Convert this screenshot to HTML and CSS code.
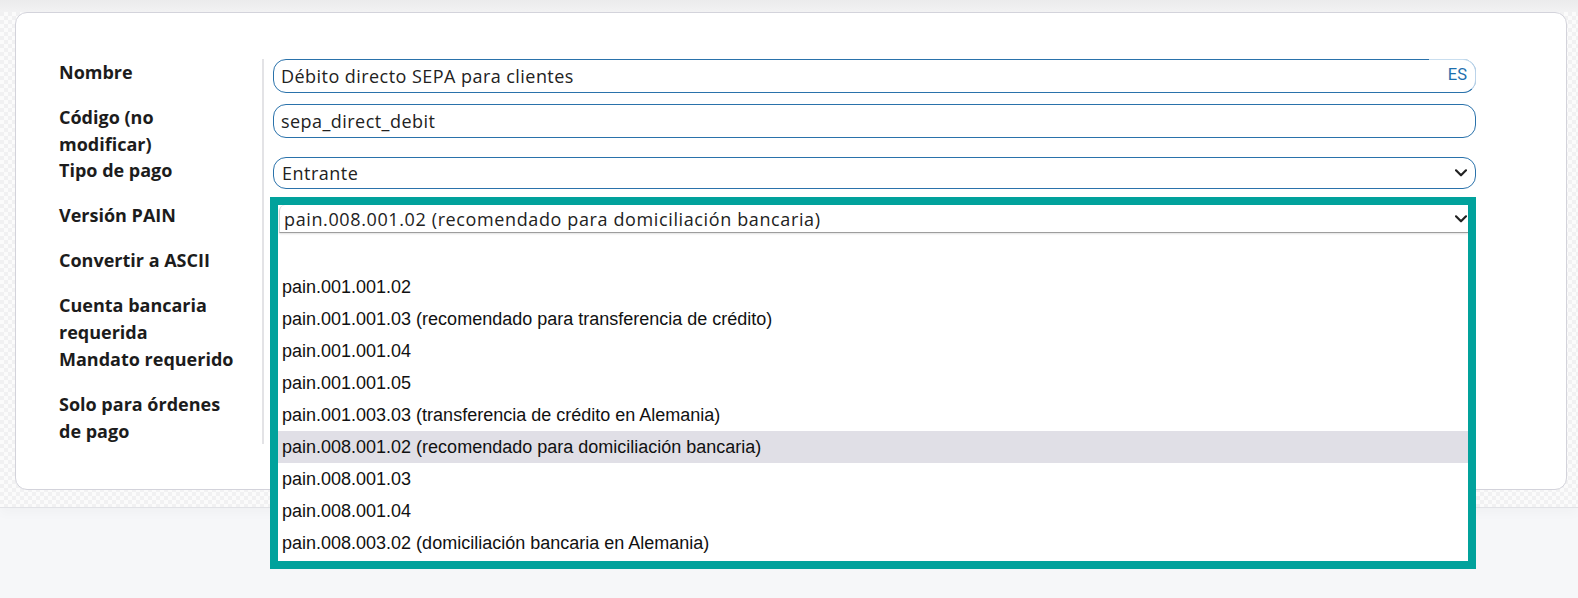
FILE: index.html
```html
<!DOCTYPE html>
<html lang="es">
<head>
<meta charset="utf-8">
<title>Método de pago</title>
<link rel="stylesheet" href="styles.css">
</head>
<body>
<div class="frame">
  <div class="card">
    <div class="form">
      <div class="row">
        <div class="label">Nombre</div>
        <div class="field">
          <div class="input-wrap">
            <div class="input">Débito directo SEPA para clientes</div>
            <span class="lang">ES</span>
          </div>
        </div>
      </div>
      <div class="row">
        <div class="label">Código (no modificar)</div>
        <div class="field"><div class="input">sepa_direct_debit</div></div>
      </div>
      <div class="row">
        <div class="label">Tipo de pago</div>
        <div class="field">
          <div class="select">
            <span>Entrante</span>
            <svg class="chev" width="12" height="8" viewBox="0 0 12 8"><path d="M1 1.3 L6 6.3 L11 1.3"/></svg>
          </div>
        </div>
      </div>
      <div class="row">
        <div class="label">Versión PAIN</div>
        <div class="field field-pain">
          <div class="popup">
            <div class="popup-head">
              <span>pain.008.001.02 (recomendado para domiciliación bancaria)</span>
              <svg class="chev" width="12" height="8" viewBox="0 0 12 8"><path d="M1 1.3 L6 6.3 L11 1.3"/></svg>
            </div>
            <ul class="options">
              <li class="opt"></li>
              <li class="opt">pain.001.001.02</li>
              <li class="opt">pain.001.001.03 (recomendado para transferencia de crédito)</li>
              <li class="opt">pain.001.001.04</li>
              <li class="opt">pain.001.001.05</li>
              <li class="opt">pain.001.003.03 (transferencia de crédito en Alemania)</li>
              <li class="opt opt-active">pain.008.001.02 (recomendado para domiciliación bancaria)</li>
              <li class="opt">pain.008.001.03</li>
              <li class="opt">pain.008.001.04</li>
              <li class="opt">pain.008.003.02 (domiciliación bancaria en Alemania)</li>
            </ul>
          </div>
        </div>
      </div>
      <div class="row">
        <div class="label">Convertir a ASCII</div>
        <div class="field"></div>
      </div>
      <div class="row">
        <div class="label">Cuenta bancaria requerida</div>
        <div class="field"></div>
      </div>
      <div class="row">
        <div class="label">Mandato requerido</div>
        <div class="field"></div>
      </div>
      <div class="row">
        <div class="label">Solo para órdenes de pago</div>
        <div class="field"></div>
      </div>
    </div>
  </div>
</div>
</body>
</html>
```
FILE: styles.css
```css
* { box-sizing: border-box; }

html, body {
  margin: 0;
  padding: 0;
}

body {
  min-height: 100vh;
  background: #f6f7f9;
  font-family: "Open Sans", "Liberation Sans", sans-serif;
  color: #1e1e1e;
}

.frame {
  padding: 12px 11px 17px 15px;
  background:
    linear-gradient(#ebebec, #f2f2f3) top left / 100% 12px no-repeat,
    repeating-conic-gradient(#f1f1f2 0% 25%, #fbfbfb 0% 50%) 0 0 / 8px 8px;
  border-bottom: 1px solid #e1e2e6;
  box-shadow: 0 6px 10px rgba(0, 0, 0, 0.025);
}

.card {
  background: #fff;
  border: 1px solid #d3d3db;
  border-radius: 12px;
  padding: 46px 90px 45px 43px;
}

.row {
  display: grid;
  grid-template-columns: 203px 1fr;
  min-height: 45px;
}

.label {
  font-weight: 700;
  font-size: 18px;
  line-height: 26.7px;
  color: #1c1c1c;
  padding-right: 18px;
}

.field {
  border-left: 2px solid #e3e3e6;
  padding-left: 9px;
  position: relative;
}

.input-wrap {
  position: relative;
}

.input {
  height: 34px;
  border: 1px solid #2a72ab;
  border-radius: 13px;
  padding: 0 7px;
  display: flex;
  align-items: center;
  font-size: 18px;
  letter-spacing: 0.45px;
  color: #222;
  background: #fff;
}

.lang {
  position: absolute;
  top: 0;
  right: 0;
  width: 47px;
  height: 34px;
  background: #fff;
  border-top: 1px solid #c9deef;
  border-right: 1px solid #bcd4ea;
  border-bottom: 1px solid #2a72ab;
  border-radius: 0 13px 13px 0;
  font-family: Roboto, "Liberation Sans", sans-serif;
  font-size: 16.5px;
  color: #1e6fae;
  display: flex;
  align-items: center;
  justify-content: flex-end;
  padding: 0 8px 3px 0;
}

.select {
  height: 32px;
  border: 1px solid #2a72ab;
  border-radius: 13px;
  padding: 0 8px 0 8px;
  display: flex;
  align-items: center;
  justify-content: space-between;
  font-size: 18px;
  letter-spacing: 0.5px;
  color: #222;
}

.chev path {
  fill: none;
  stroke: #222;
  stroke-width: 2.2;
  stroke-linecap: round;
  stroke-linejoin: round;
}

/* open dropdown, highlighted */
.popup {
  position: absolute;
  left: 6px;
  top: -5px;
  width: 1206px;
  height: 372px;
  border: 8px solid #01a29c;
  background: #fff;
  z-index: 2;
  display: flex;
  flex-direction: column;
}

.popup-head {
  height: 28px;
  flex: none;
  margin-left: 1px;
  border-left: 1px solid #d6d6d6;
  border-top-left-radius: 6px;
  border-bottom: 1px solid #9d9d9d;
  box-shadow: 0 1px 2px rgba(0, 0, 0, 0.12);
  display: flex;
  align-items: center;
  justify-content: space-between;
  padding: 0 0 0 4px;
  font-size: 18px;
  letter-spacing: 0.62px;
  color: #222;
}

.popup-head .chev {
  margin-right: 1px;
}

.options {
  list-style: none;
  margin: 0;
  padding: 6px 0 0 0;
  font-family: "Liberation Sans", Arial, sans-serif;
  font-size: 18px;
  color: #111;
}

.opt {
  height: 32px;
  line-height: 32px;
  padding-left: 4px;
  white-space: nowrap;
}

.opt-active {
  background: #e0dfe6;
}
```
